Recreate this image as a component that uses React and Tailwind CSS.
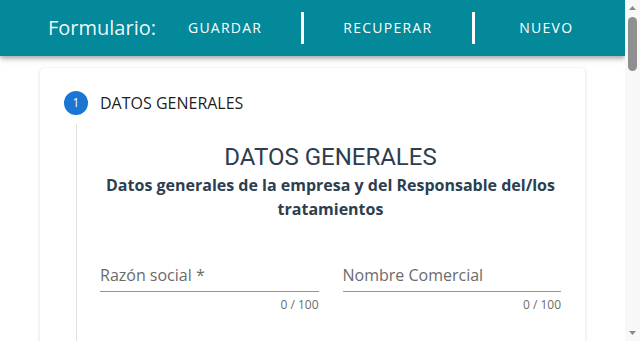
import React from "react";

const NavButton = ({ children, className = "" }) => (
  <button className={`text-[14px] tracking-[1.25px] uppercase text-white leading-none ${className}`}>
    {children}
  </button>
);

const Separator = ({ className = "" }) => (
  <div className={`w-[3px] h-[32px] bg-white ${className}`} />
);

const TextField = ({ label }) => (
  <div className="flex-1 min-w-0">
    <div className="h-[32px] flex items-end pb-[4px] border-b border-[#949494]">
      <span className="text-[16px] leading-6 text-[#6b6b6b]">{label}</span>
    </div>
    <div className="mt-[5px] text-right text-[12px] leading-4 text-[#6b6b6b]">0 / 100</div>
  </div>
);

// page scrollbar as drawn by the browser in the screenshot
const ScrollBar = () => (
  <div className="w-[15px] h-[341px] bg-[#f8f8f8] flex flex-col items-center">
    <svg width="15" height="15" viewBox="0 0 15 15" className="shrink-0">
      <path d="M4 10 L7.5 6 L11 10 Z" fill="#8a8a8a" />
    </svg>
    <div className="w-[9px] h-[54px] mt-[2px] rounded-full bg-[#8f8f8f]" />
    <div className="flex-1" />
    <svg width="15" height="15" viewBox="0 0 15 15" className="shrink-0">
      <path d="M4 5 L11 5 L7.5 9 Z" fill="#8a8a8a" />
    </svg>
  </div>
);

export default function App() {
  return (
    <div className="flex h-[341px] overflow-hidden bg-white font-['Open_Sans',sans-serif]">
      <div className="w-[625px] h-[341px] overflow-hidden">
        <header className="relative z-10 h-[56px] bg-[#03899a] flex items-center pl-[48px] shadow-[0_2px_4px_rgba(0,0,0,0.25),0_4px_6px_rgba(0,0,0,0.12)]">
          <span className="text-[20px] text-white/95">Formulario:</span>
          <NavButton className="ml-[32px]">Guardar</NavButton>
          <Separator className="ml-[39px]" />
          <NavButton className="ml-[39px]">Recuperar</NavButton>
          <Separator className="ml-[40px]" />
          <NavButton className="ml-[44px]">Nuevo</NavButton>
        </header>

        <main className="px-[40px] pt-[12px]">
          <div className="bg-white rounded-[4px] shadow-[0_1px_4px_rgba(0,0,0,0.12),0_0_1px_rgba(0,0,0,0.1)] min-h-[800px]">
            <div className="flex items-center pt-[23px] pl-[24px]">
              <div className="w-[24px] h-[24px] rounded-full bg-[#1976d2] flex items-center justify-center text-[12px] text-white">
                1
              </div>
              <span className="ml-[12px] text-[16px] text-black/90">DATOS GENERALES</span>
            </div>

            <div className="ml-[36px] mt-[9px] border-l border-[#e0e0e0] pl-[23px] pr-[24px] pt-[17px] min-h-[700px]">
              <h2 className="text-center text-[24px] leading-8 text-[#2c3e50] font-['Roboto',sans-serif]">
                DATOS GENERALES
              </h2>
              <p className="text-center text-[16px] leading-6 font-bold text-[#2c3e50] px-[4px]">
                Datos generales de la empresa y del Responsable del/los tratamientos
              </p>

              <div className="mt-[39px] flex gap-[24px]">
                <TextField label="Razón social *" />
                <TextField label="Nombre Comercial" />
              </div>
            </div>
          </div>
        </main>
      </div>
      <ScrollBar />
    </div>
  );
}
